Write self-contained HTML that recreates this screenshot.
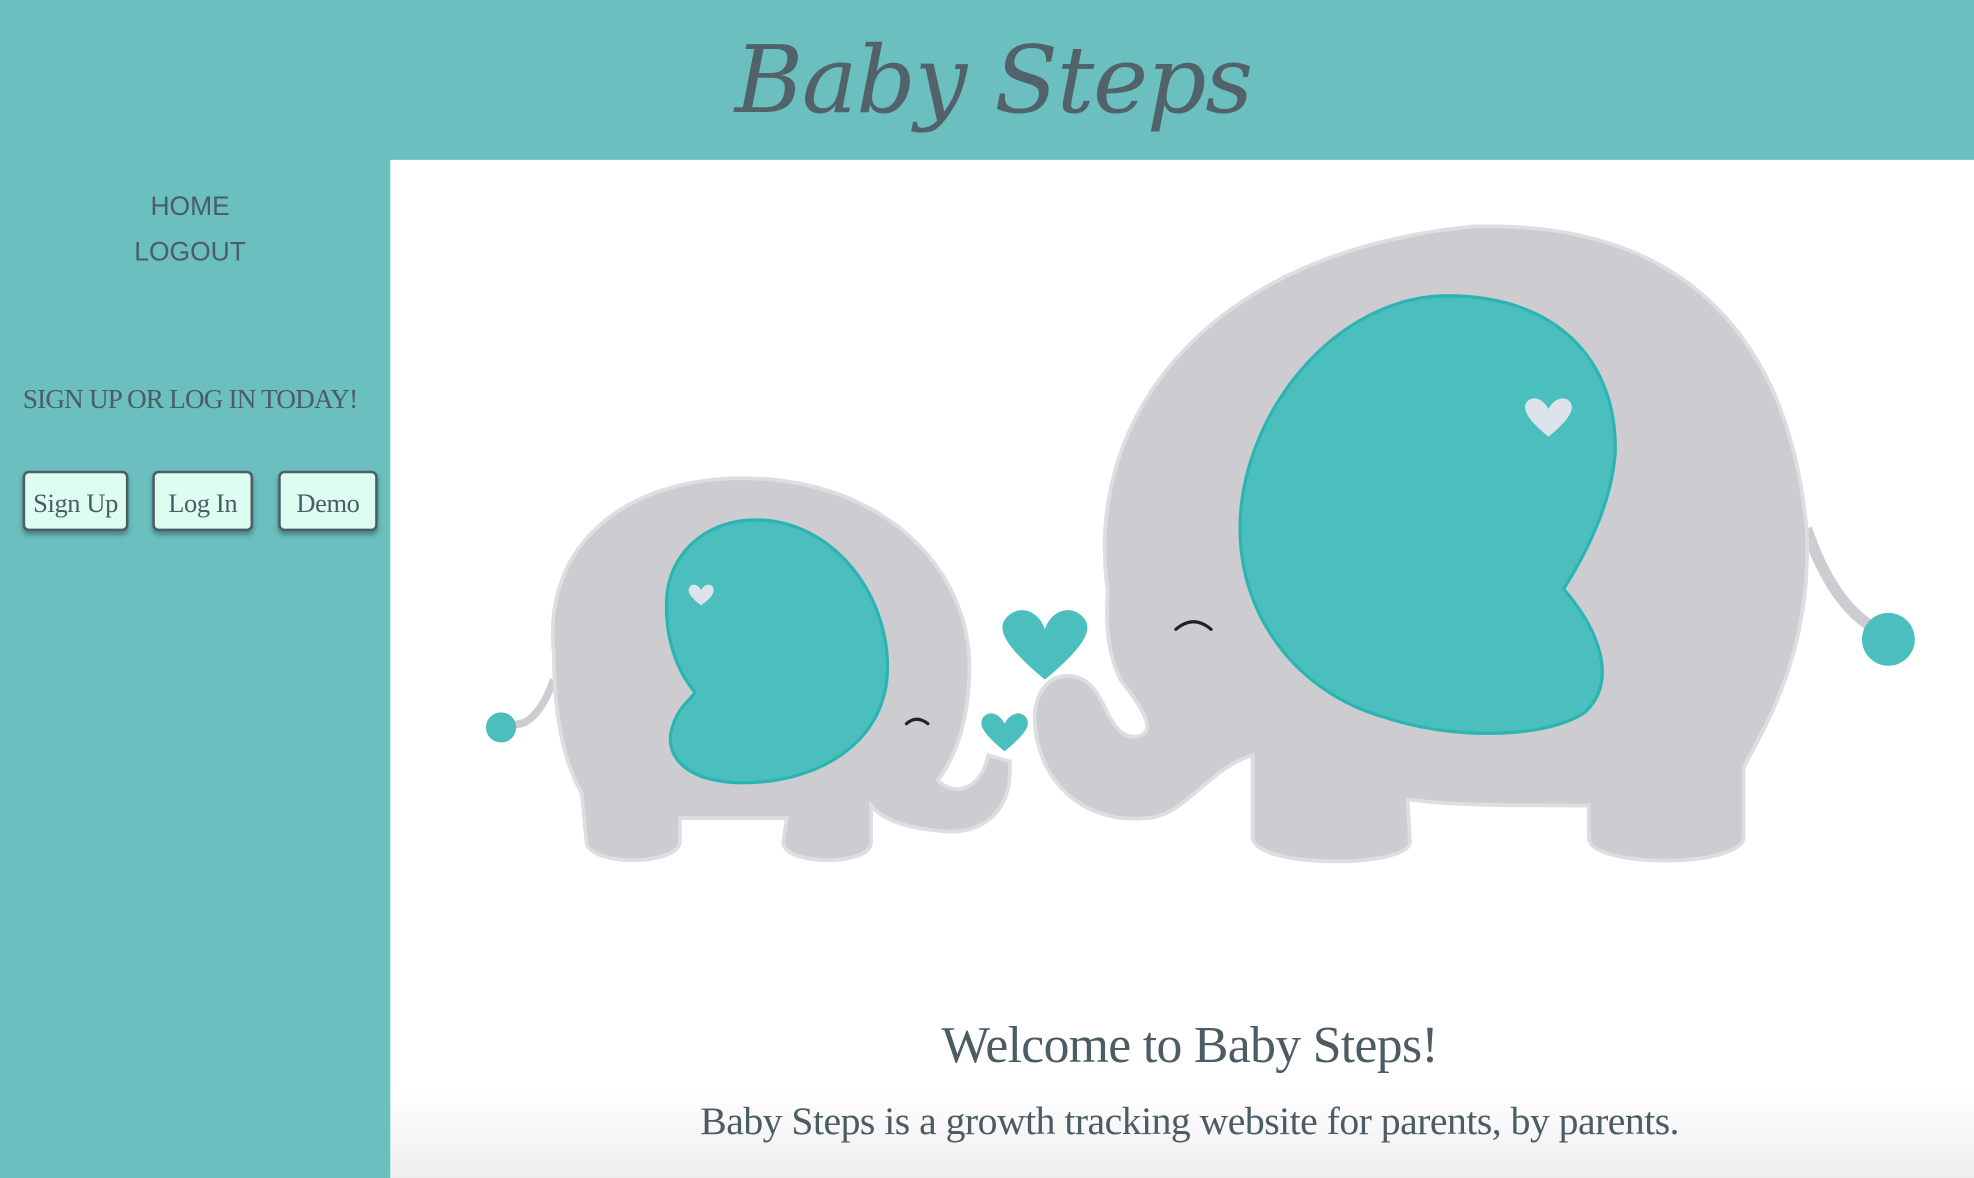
<!DOCTYPE html>
<html><head><meta charset="utf-8"><style>
html,body{margin:0;padding:0;width:1974px;height:1178px;overflow:hidden;background:#6bbfbf}
#s{position:absolute;left:0;top:0;width:1568px;height:936px;transform:scale(1.25893,1.25855);transform-origin:0 0;}
.t{position:absolute;color:#4b5c64;white-space:nowrap}
.main{position:absolute;left:310px;top:127px;width:1258px;height:809px;background:linear-gradient(#fff 0,#fff 740px,#eeeeee 809px)}
.btn{position:absolute;top:374px;height:48px;background:#dcfdf0;border:2px solid #4d5e64;border-radius:5px;box-shadow:0 3px 4px rgba(0,0,0,.3);box-sizing:border-box;font:21px "Liberation Serif",serif;color:#4b5c64;text-align:center;line-height:48px;letter-spacing:-0.3px}
</style></head><body><div id="s">
<div class="t" style="left:0;width:1568px;top:21px;text-align:center;padding-left:10px;box-sizing:border-box;font:italic 74px 'DejaVu Serif',serif;letter-spacing:-1px;color:#52626a">Baby Steps</div>
<div class="t" style="left:0;width:302px;top:153px;text-align:center;font:21px 'Liberation Sans',sans-serif">HOME</div>
<div class="t" style="left:0;width:302px;top:189px;text-align:center;font:21px 'Liberation Sans',sans-serif">LOGOUT</div>
<div class="t" style="left:0;width:302px;top:305px;text-align:center;font:21.5px 'Liberation Serif',serif;letter-spacing:-0.6px">SIGN UP OR LOG IN TODAY!</div>
<div class="btn" style="left:18px;width:84px">Sign Up</div>
<div class="btn" style="left:121px;width:80px">Log In</div>
<div class="btn" style="left:221px;width:79px">Demo</div>
<div class="main"></div>
<svg style="position:absolute;left:0;top:0" width="1568" height="936" viewBox="0 0 1568 936">
<g fill="#cdccd1" stroke="#dedde2" stroke-width="3">
<path d="M1435 420 Q1455 480 1490 500" fill="none" stroke="#cdccd1" stroke-width="9"/>
<path d="M880 470 C860 330 960 200 1170 180 C1330 175 1420 260 1435 420 C1440 520 1400 580 1385 610 L1385 665 C1385 690 1260 690 1262 665 L1262 640 C1200 640 1150 640 1118 635 L1120 670 C1115 690 995 690 995 665 L995 600 C960 610 940 650 910 650 C860 655 825 620 822 575 C820 545 840 530 860 540 C880 550 880 590 905 585 C920 580 905 560 890 540 C880 520 878 495 880 470 Z"/>
<path d="M440 540 Q425 580 405 575" fill="none" stroke="#cdccd1" stroke-width="6"/>
<path d="M440 520 C430 430 500 380 590 380 C700 380 770 450 770 530 C770 570 760 600 745 620 C760 635 780 625 785 600 L802 605 C805 645 780 665 745 660 C715 657 700 650 692 640 L692 670 C690 688 625 688 622 670 L625 650 L540 650 L540 670 C535 688 470 688 466 670 L462 630 C445 600 440 560 440 520 Z"/>
</g>
<g fill="#4bbfbd" stroke="#2ab4b2" stroke-width="2.5">
<path d="M1150 235 C1240 235 1285 290 1283 360 C1280 400 1260 440 1242 468 C1270 500 1285 540 1260 565 C1235 585 1160 590 1100 570 C1030 550 985 490 985 420 C985 330 1060 235 1150 235 Z"/>
<path d="M600 413 C660 413 705 470 705 530 C705 590 650 622 590 622 C545 622 525 600 535 575 C540 560 550 555 552 550 C535 530 527 500 530 470 C535 435 565 413 600 413 Z"/>
<circle cx="1500" cy="508" r="21" stroke="none"/>
<circle cx="398" cy="578" r="12" stroke="none"/>
<path stroke="none" d="M830 540 C800 515 790 500 800 490 C810 480 825 485 830 500 C835 485 850 480 860 490 C870 500 860 515 830 540 Z"/>
<path stroke="none" d="M798 597 C784 585 776 577 781 570 C786 564 794 567 798 575 C802 567 810 564 815 570 C820 577 812 585 798 597 Z"/>
</g>
<g fill="#dde3ea">
<path d="M1230 347 C1215 335 1208 325 1213 319 C1218 314 1226 317 1230 325 C1234 317 1242 314 1247 319 C1252 325 1245 335 1230 347 Z"/>
<path d="M557 481 C549 475 545 470 548 466 C551 463 555 465 557 469 C559 465 563 463 566 466 C569 470 565 475 557 481 Z"/>
</g>
<g fill="none" stroke="#222" stroke-width="2.5" stroke-linecap="round">
<path d="M934 500 Q948 488 962 500"/>
<path d="M720 575 Q728 568 737 575"/>
</g>
</svg>
<div class="t" style="left:310px;width:1270px;top:806px;text-align:center;font:41px 'Liberation Serif',serif;letter-spacing:-0.5px">Welcome to Baby Steps!</div>
<div class="t" style="left:310px;width:1270px;top:873px;text-align:center;font:31.5px 'Liberation Serif',serif;letter-spacing:-0.4px">Baby Steps is a growth tracking website for parents, by parents.</div>
</div></body></html>
